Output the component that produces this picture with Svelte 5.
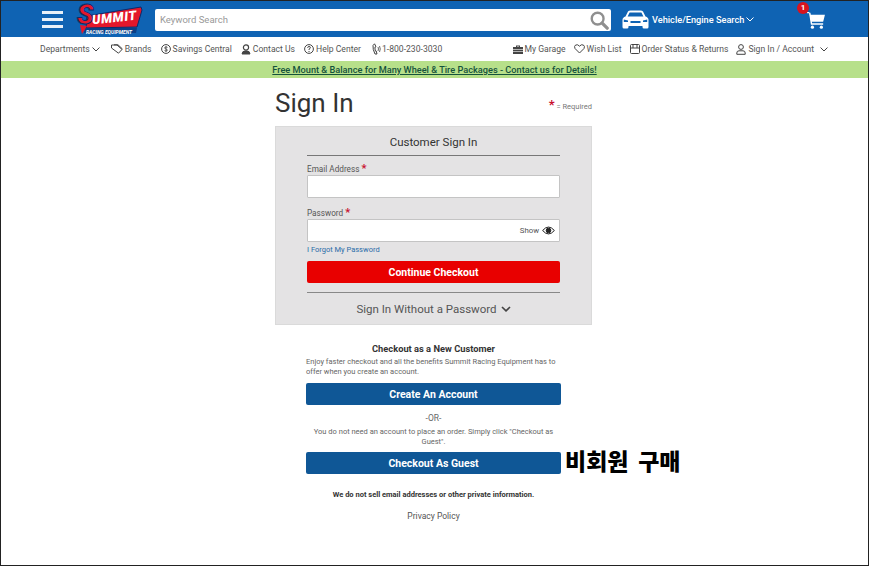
<script>
  const navLeft = ['Brands', 'Savings Central', 'Contact Us', 'Help Center'];
</script>

<div class="frame">
  <header class="top">
    <button class="burger" aria-label="Menu"><span></span><span></span><span></span></button>
    <div class="logo">
      <svg class="logo-bg" width="66" height="30" viewBox="0 0 66 30">
        <path d="M10 11 L64 2 L65 5 L60 22 L9 23 Z" fill="#e4172b" stroke="#0b2a6b" stroke-width="1" />
        <path d="M8 23 H60 L59 28 H7 Z" fill="#0a3f86" />
        <path d="M3 20 L10 21 L5 29 Z" fill="#e4172b" />
      </svg>
      <span class="logo-s">S</span>
      <span class="logo-name">UMMIT</span>
      <span class="logo-sub">RACING EQUIPMENT</span>
    </div>
    <div class="search">
      <span class="placeholder">Keyword Search</span>
      <svg width="20" height="20" viewBox="0 0 22 22" fill="none" stroke="#8f8f8f">
        <circle cx="9.5" cy="9.5" r="6.5" stroke-width="2.6" />
        <path d="M14.5 14.5 L20 20" stroke-width="3.6" stroke-linecap="round" />
      </svg>
    </div>
    <div class="vehicle">
      <svg width="27" height="19" viewBox="0 0 27 19">
        <path fill="#fff" d="M6 1.5 Q6.8 .5 8.5 .5 H18.5 Q20.2 .5 21 1.5 L23.5 6.5 Q26.5 7.5 26.5 10 V17 Q26.5 18.5 25 18.5 H22 Q20.5 18.5 20.5 17 V16 H6.5 V17 Q6.5 18.5 5 18.5 H2 Q.5 18.5 .5 17 V10 Q.5 7.5 3.5 6.5 Z" />
        <path fill="#0f63b3" d="M7.6 2.6 H19.4 L21.4 6.6 H5.6 Z M1.8 9.4 L6 10.5 V12 H1.8 Z M25.2 9.4 L21 10.5 V12 H25.2 Z M8.5 11 H18.5 V13 H8.5 Z" />
      </svg>
      <span>Vehicle/Engine Search</span>
      <svg class="chev" width="8" height="5" viewBox="0 0 8 5" fill="none" stroke="#fff" stroke-width="1"><path d="M.5 .5 L4 4 L7.5 .5" /></svg>
    </div>
    <div class="cart">
      <svg width="18" height="17" viewBox="0 0 20 19" fill="#fff">
        <path d="M3 3 H20 L18 11 H4.5 Z" />
        <path d="M2.6 .5 H0 M3 1 L5 13.5 H18" fill="none" stroke="#fff" stroke-width="1.6" />
        <circle cx="6" cy="17" r="1.8" /><circle cx="16" cy="17" r="1.8" />
      </svg>
      <span class="badge">1</span>
    </div>
  </header>

  <nav class="nav">
    <div class="nav-group left">
      <span class="item dept">Departments
        <svg class="chev" width="8" height="5" viewBox="0 0 8 5" fill="none" stroke="#444" stroke-width="1"><path d="M.5 .5 L4 4 L7.5 .5" /></svg>
      </span>
      {#each navLeft as label, i}
        <span class="item">
          {#if i === 0}
            <svg width="12" height="10" viewBox="0 0 12 10" fill="none" stroke="#444"><path d="M.5 1 H6 L11 5.5 L7.5 9.2 L.5 4 Z" /><path d="M3 .8 H7 L11.5 5" /></svg>
          {:else if i === 1}
            <svg width="10" height="10" viewBox="0 0 10 10" fill="none" stroke="#444"><circle cx="5" cy="5" r="4.4" /><path d="M6.5 3.4 Q5 2.5 3.8 3.4 Q3.2 4.6 5 5 Q6.8 5.5 6.2 6.6 Q5 7.5 3.5 6.6 M5 2 V8" stroke-width=".8" /></svg>
          {:else if i === 2}
            <svg width="10" height="11" viewBox="0 0 10 11" fill="none" stroke="#444"><circle cx="5" cy="3.4" r="2.6" stroke-width="1.2" /><path d="M1 10 Q1 6.8 5 6.8 Q9 6.8 9 10 Z" fill="#444" /></svg>
          {:else}
            <svg width="10" height="10" viewBox="0 0 10 10" fill="none" stroke="#444"><circle cx="5" cy="5" r="4.4" /><path d="M3.6 3.8 Q3.8 2.5 5 2.5 Q6.5 2.5 6.4 3.8 Q6.2 4.6 5 5.2 V6" /><path d="M5 7 V8" /></svg>
          {/if}
          {label}
        </span>
      {/each}
      <span class="item phone">
        <svg width="9" height="12" viewBox="0 0 9 12" fill="none" stroke="#444"><path d="M2.5 .8 L1 2.5 Q.6 6.5 3 11 L5 11 L4.2 8 L3.4 8 Q2.8 6 3 4 L4 3.6 Z" /><path d="M6 4 Q7 6 6 8 M7.5 3 Q9 6 7.5 9" stroke-width=".8" /></svg>1-800-230-3030
      </span>
    </div>
    <div class="nav-group right">
      <span class="item">
        <svg width="10" height="9" viewBox="0 0 10 9" fill="#444"><path d="M0 2 H10 V9 H0 Z M3 2 V.5 H7 V2 H6 V1.4 H4 V2 Z" /><path d="M0 4.5 H10 M0 6.5 H10" stroke="#fff" stroke-width=".6" /></svg>
        My Garage
      </span>
      <span class="item">
        <svg width="11" height="10" viewBox="0 0 11 10" fill="none" stroke="#444"><path d="M5.5 9 L1 4.5 Q-.2 2.4 1.6 1 Q3.8 0 5.5 2.2 Q7.2 0 9.4 1 Q11.2 2.4 10 4.5 Z" /></svg>
        Wish List
      </span>
      <span class="item">
        <svg width="10" height="10" viewBox="0 0 10 10" fill="none" stroke="#444"><rect x=".5" y=".5" width="9" height="9" rx="1" /><path d="M.5 4 H9.5 M3 .5 V4 M7 .5 V4" /></svg>
        Order Status &amp; Returns
      </span>
      <span class="item account">
        <svg width="10" height="11" viewBox="0 0 10 11" fill="none" stroke="#444"><circle cx="5" cy="3" r="2.4" /><path d="M.8 10.3 V9 Q.8 6.8 3 6.8 H7 Q9.2 6.8 9.2 9 V10.3 Z" /></svg>
        <span class="account-text">Sign In / Account</span>
        <svg class="chev wide" width="8" height="5" viewBox="0 0 8 5" fill="none" stroke="#444" stroke-width="1"><path d="M.5 .5 L4 4 L7.5 .5" /></svg>
      </span>
    </div>
  </nav>

  <div class="promo"><a href="#promo">Free Mount &amp; Balance for Many Wheel &amp; Tire Packages - Contact us for Details!</a></div>

  <main class="main">
    <div class="title-row">
      <h1>Sign In</h1>
      <span class="required"><b>*</b> = Required</span>
    </div>

    <section class="card">
      <h2>Customer Sign In</h2>
      <label class="field-label" for="email">Email Address <b>*</b></label>
      <div class="input" id="email"></div>
      <label class="field-label pw" for="pw">Password <b>*</b></label>
      <div class="input show-row" id="pw">
        <span>Show</span>
        <svg width="13" height="9" viewBox="0 0 13 9" fill="none" stroke="#222"><path d="M.6 4.5 Q6.5 -2.4 12.4 4.5 Q6.5 11.4 .6 4.5 Z" /><circle cx="6.5" cy="4.5" r="2.3" fill="#222" /></svg>
      </div>
      <a class="forgot" href="#forgot">I Forgot My Password</a>
      <button class="btn red">Continue Checkout</button>
      <div class="no-pass">
        Sign In Without a Password
        <svg width="10" height="6" viewBox="0 0 10 6" fill="none" stroke="#444" stroke-width="1.7"><path d="M1 1 L5 4.8 L9 1" /></svg>
      </div>
    </section>

    <section class="guest">
      <h3>Checkout as a New Customer</h3>
      <p class="left-text">Enjoy faster checkout and all the benefits Summit Racing Equipment has to offer when you create an account.</p>
      <button class="btn blue first">Create An Account</button>
      <div class="or">-OR-</div>
      <p class="center-text">You do not need an account to place an order. Simply click "Checkout as Guest".</p>
      <div class="guest-btn">
        <button class="btn blue">Checkout As Guest</button>
        <span class="note">비회원 구매</span>
      </div>
      <p class="sell">We do not sell email addresses or other private information.</p>
      <a class="privacy" href="#privacy">Privacy Policy</a>
    </section>
  </main>
</div>

<style>
  :global(body) {
    margin: 0;
    background: #fff;
  }
  .frame {
    box-sizing: border-box;
    width: 869px;
    height: 566px;
    border: 1px solid #222;
    font-family: Roboto, "Noto Sans CJK KR", sans-serif;
    color: #555;
    overflow: hidden;
  }

  .top {
    height: 36px;
    background: #0f63b3;
    display: flex;
    align-items: center;
  }
  .burger {
    display: flex;
    flex-direction: column;
    gap: 4px;
    width: 21px;
    margin-left: 41px;
    padding: 0;
    border: none;
    background: none;
  }
  .burger span {
    height: 3px;
    background: #e8f0f8;
  }
  .logo {
    position: relative;
    width: 66px;
    height: 30px;
    margin-left: 14px;
    margin-top: 2px;
  }
  .logo-bg {
    position: absolute;
    left: 0;
    top: 0;
  }
  .logo-s {
    position: absolute;
    left: 0;
    top: -3px;
    font-size: 27px;
    line-height: 27px;
    font-weight: 900;
    font-style: italic;
    color: #e4172b;
    -webkit-text-stroke: 1px #0b2a6b;
  }
  .logo-name {
    position: absolute;
    left: 15px;
    top: 6px;
    font-size: 13px;
    line-height: 14px;
    letter-spacing: .6px;
    font-weight: 900;
    font-style: italic;
    color: #fff;
    transform: rotate(-6deg);
  }
  .logo-sub {
    position: absolute;
    left: 9px;
    top: 24px;
    font-size: 5px;
    line-height: 6px;
    font-weight: 700;
    font-style: italic;
    color: #fff;
    white-space: nowrap;
  }
  .search {
    width: 456px;
    height: 22px;
    margin-left: 12px;
    margin-top: 1px;
    background: #fff;
    border-radius: 2px;
    display: flex;
    align-items: center;
    justify-content: space-between;
    padding: 0 2px 0 5px;
    box-sizing: border-box;
  }
  .placeholder {
    font-size: 9.5px;
    color: #999;
  }
  .vehicle {
    display: flex;
    align-items: center;
    margin-left: 11px;
    color: #fff;
    font-size: 9.2px;
    font-weight: 500;
    white-space: nowrap;
  }
  .vehicle span {
    margin-left: 3px;
    margin-right: 2px;
  }
  .cart {
    position: relative;
    margin-left: auto;
    margin-right: 43px;
    margin-top: 3px;
  }
  .cart svg {
    display: block;
  }
  .badge {
    position: absolute;
    left: -10px;
    top: -10px;
    width: 12px;
    height: 12px;
    border-radius: 50%;
    background: #d8131f;
    color: #fff;
    font-size: 8px;
    line-height: 12px;
    font-weight: 700;
    text-align: center;
  }

  .nav {
    height: 24px;
    display: flex;
    justify-content: space-between;
    align-items: center;
    padding: 0 40px 0 39px;
    font-size: 8.6px;
    white-space: nowrap;
  }
  .nav-group {
    display: flex;
    align-items: center;
    gap: 9px;
  }
  .right {
    gap: 8px;
  }
  .item {
    display: flex;
    align-items: center;
    gap: 2px;
  }
  .dept {
    margin-right: 2px;
    gap: 2px;
  }
  .phone {
    gap: 1px;
    margin-left: 2px;
  }
  .account {
    gap: 2px;
  }
  .chev.wide {
    margin-left: 4px;
  }

  .promo {
    height: 17px;
    background: #b7e08a;
    text-align: center;
    font-size: 9.2px;
    line-height: 18px;
    font-weight: 500;
  }
  .promo a {
    color: #14523c;
  }

  .main {
    width: 317px;
    margin-left: 274px;
  }
  .title-row {
    height: 48px;
    display: flex;
    justify-content: space-between;
    align-items: flex-start;
  }
  h1 {
    margin: 8px 0 0;
    font-size: 26px;
    line-height: 34px;
    font-weight: 400;
    color: #333;
  }
  .required {
    margin-top: 22px;
    font-size: 7.5px;
    line-height: 14px;
    color: #777;
  }
  .required b {
    color: #c8102e;
    font-size: 13px;
    line-height: 10px;
  }

  .card {
    box-sizing: border-box;
    height: 199px;
    background: #e4e3e4;
    border: 1px solid #dadada;
    padding: 0 31px;
  }
  h2 {
    margin: 0;
    height: 28px;
    border-bottom: 1px solid #777;
    font-size: 11.5px;
    line-height: 31px;
    font-weight: 400;
    text-align: center;
    color: #333;
  }
  .field-label {
    display: block;
    margin-top: 7px;
    height: 12px;
    font-size: 8.2px;
    line-height: 13px;
  }
  .field-label.pw {
    margin-top: 9px;
  }
  .field-label b {
    color: #c8102e;
    font-size: 11px;
    line-height: 10px;
  }
  .input {
    box-sizing: border-box;
    height: 23px;
    background: #fff;
    border: 1px solid #c4c4c4;
    border-radius: 1px;
  }
  .show-row {
    display: flex;
    align-items: center;
    justify-content: flex-end;
    gap: 3px;
    padding-right: 4px;
    font-size: 7.8px;
    color: #555;
  }
  .forgot {
    display: block;
    height: 19px;
    font-size: 7.5px;
    line-height: 15px;
    color: #2a6ca8;
    text-decoration: none;
  }
  .btn {
    display: block;
    width: 100%;
    height: 22px;
    padding: 0;
    border: none;
    border-radius: 2px;
    color: #fff;
    font-family: inherit;
    font-size: 10.5px;
    font-weight: 700;
  }
  .red {
    background: #e80000;
  }
  .blue {
    background: #0f5796;
  }
  .no-pass {
    margin-top: 9px;
    border-top: 1px solid #888;
    height: 32px;
    display: flex;
    align-items: center;
    justify-content: center;
    gap: 4px;
    font-size: 11.5px;
    padding-top: 1px;
    box-sizing: border-box;
  }

  .guest {
    width: 255px;
    margin: 17px 0 0 31px;
    text-align: center;
    font-size: 7.5px;
    color: #666;
  }
  h3 {
    margin: 0;
    font-size: 9.3px;
    line-height: 14px;
    font-weight: 700;
    color: #333;
  }
  .left-text {
    margin: 1px 0 0;
    text-align: left;
    line-height: 10px;
  }
  .first {
    margin-top: 6px;
  }
  .or {
    margin-top: 8px;
    font-size: 8.5px;
    line-height: 11px;
  }
  .center-text {
    margin: 3px 0 0;
    padding: 0 4px;
    line-height: 9.5px;
  }
  .guest-btn {
    position: relative;
    margin-top: 6px;
  }
  .note {
    position: absolute;
    left: 259px;
    top: 0;
    font-size: 23px;
    line-height: 22px;
    font-weight: 900;
    word-spacing: 4px;
    color: #000;
    white-space: nowrap;
  }
  .sell {
    margin: 16px 0 0;
    font-size: 7.5px;
    line-height: 10px;
    font-weight: 700;
    color: #333;
  }
  .privacy {
    display: block;
    margin-top: 10px;
    font-size: 8.5px;
    line-height: 12px;
    color: #555;
    text-decoration: none;
  }
</style>
